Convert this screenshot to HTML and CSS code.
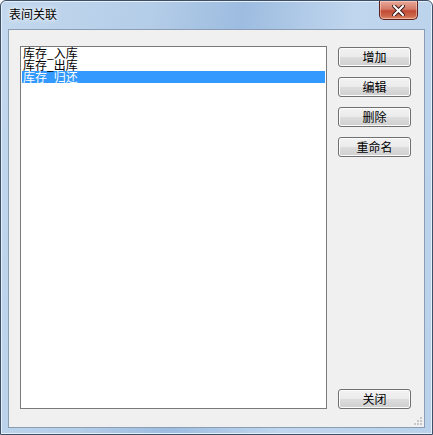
FILE: index.html
```html
<!DOCTYPE html>
<html lang="zh-CN">
<head>
    <meta charset="UTF-8">
    <title>表间关联</title>
    <link rel="stylesheet" href="styles.css">
</head>
<body>
    <div class="window">
        <div class="titlebar">
            <span class="title">表间关联</span>
            <span class="close-btn">
                <svg width="13" height="11" viewBox="0 0 13 11">
                    <path d="M2 1 L11 10 M11 1 L2 10" stroke="#3a1a1a" stroke-width="4" stroke-linecap="square"/>
                    <path d="M2 1 L11 10 M11 1 L2 10" stroke="#ffffff" stroke-width="2" stroke-linecap="square"/>
                </svg>
            </span>
        </div>
        <div class="client">
            <div class="listbox">
                <div class="item">库存_入库</div>
                <div class="item">库存_出库</div>
                <div class="item selected">库存_归还</div>
            </div>
            <div class="btn-container">
                <button class="btn">增加</button>
                <button class="btn">编辑</button>
                <button class="btn">删除</button>
                <button class="btn">重命名</button>
                <button class="btn btn-close">关闭</button>
            </div>
            <svg class="grip" width="9" height="9" viewBox="0 0 9 9">
                <rect x="6" y="0" width="2" height="2" fill="#c8c8c8"/>
                <rect x="3" y="3" width="2" height="2" fill="#c8c8c8"/>
                <rect x="6" y="3" width="2" height="2" fill="#c8c8c8"/>
                <rect x="0" y="6" width="2" height="2" fill="#c8c8c8"/>
                <rect x="3" y="6" width="2" height="2" fill="#c8c8c8"/>
                <rect x="6" y="6" width="2" height="2" fill="#c8c8c8"/>
            </svg>
        </div>
    </div>
</body>
</html>
```

FILE: styles.css
```css
    body {
        margin: 0;
        background: #ffffff;
        font-family: "Noto Sans CJK SC", "DejaVu Sans", sans-serif;
        font-size: 12px;
        color: #000000;
    }
    .window {
        width: 433px;
        height: 435px;
        box-sizing: border-box;
        border: 1px solid #3c4f66;
        border-radius: 6px 6px 0 0;
        background: linear-gradient(100deg, #c3d8ee 0%, #b4cde8 30%, #9dbce0 48%, #c0d6ee 70%, #b9d1ea 100%);
        box-shadow: inset 0 0 0 1px #e6f0fa;
        padding: 0 7px 6px 7px;
        display: flex;
        flex-direction: column;
    }
    .titlebar {
        height: 28px;
        display: flex;
        align-items: flex-start;
    }
    .title {
        margin-top: 5px;
        margin-left: 1px;
        line-height: 16px;
        text-shadow: 0 0 6px #ffffff, 0 0 3px #ffffff;
    }
    .close-btn {
        margin-left: auto;
        margin-right: 7px;
        width: 39px;
        height: 19px;
        box-sizing: border-box;
        border: 1px solid #5a2320;
        border-top: none;
        border-radius: 0 0 5px 5px;
        background: linear-gradient(to bottom, #e9a99a 0%, #d47a68 45%, #c24a34 55%, #cc6a4e 85%, #e0906e 100%);
        box-shadow: inset 0 0 0 1px rgba(255, 220, 210, 0.5);
        display: flex;
        align-items: center;
        justify-content: center;
    }
    .client {
        flex: 1;
        position: relative;
        background: #f0f0f0;
        border: 1px solid #8a9db3;
        padding: 16px 13px 0 11px;
        display: flex;
        gap: 11px;
    }
    .listbox {
        width: 308px;
        height: 363px;
        box-sizing: border-box;
        background: #ffffff;
        border: 1px solid #7a7a7a;
        padding: 0 1px;
    }
    .item {
        height: 12px;
        line-height: 12px;
        padding-left: 1px;
        white-space: nowrap;
    }
    .item.selected {
        background: #3399ff;
        color: #ffffff;
    }
    .btn-container {
        display: flex;
        flex-direction: column;
        gap: 10px;
        padding-top: 1px;
        height: 362px;
    }
    .btn {
        width: 73px;
        height: 20px;
        box-sizing: border-box;
        border: 1px solid #707070;
        border-radius: 3px;
        background: linear-gradient(to bottom, #f2f2f2 0%, #ebebeb 50%, #dddddd 51%, #cfcfcf 100%);
        box-shadow: inset 0 0 0 1px #fcfcfc;
        font-family: "Noto Sans CJK SC", "DejaVu Sans", sans-serif;
        font-size: 12px;
        line-height: 16px;
        padding: 0;
        color: #000000;
    }
    .btn-close {
        margin-top: auto;
    }
    .grip {
        position: absolute;
        right: 1px;
        bottom: 1px;
    }
```
